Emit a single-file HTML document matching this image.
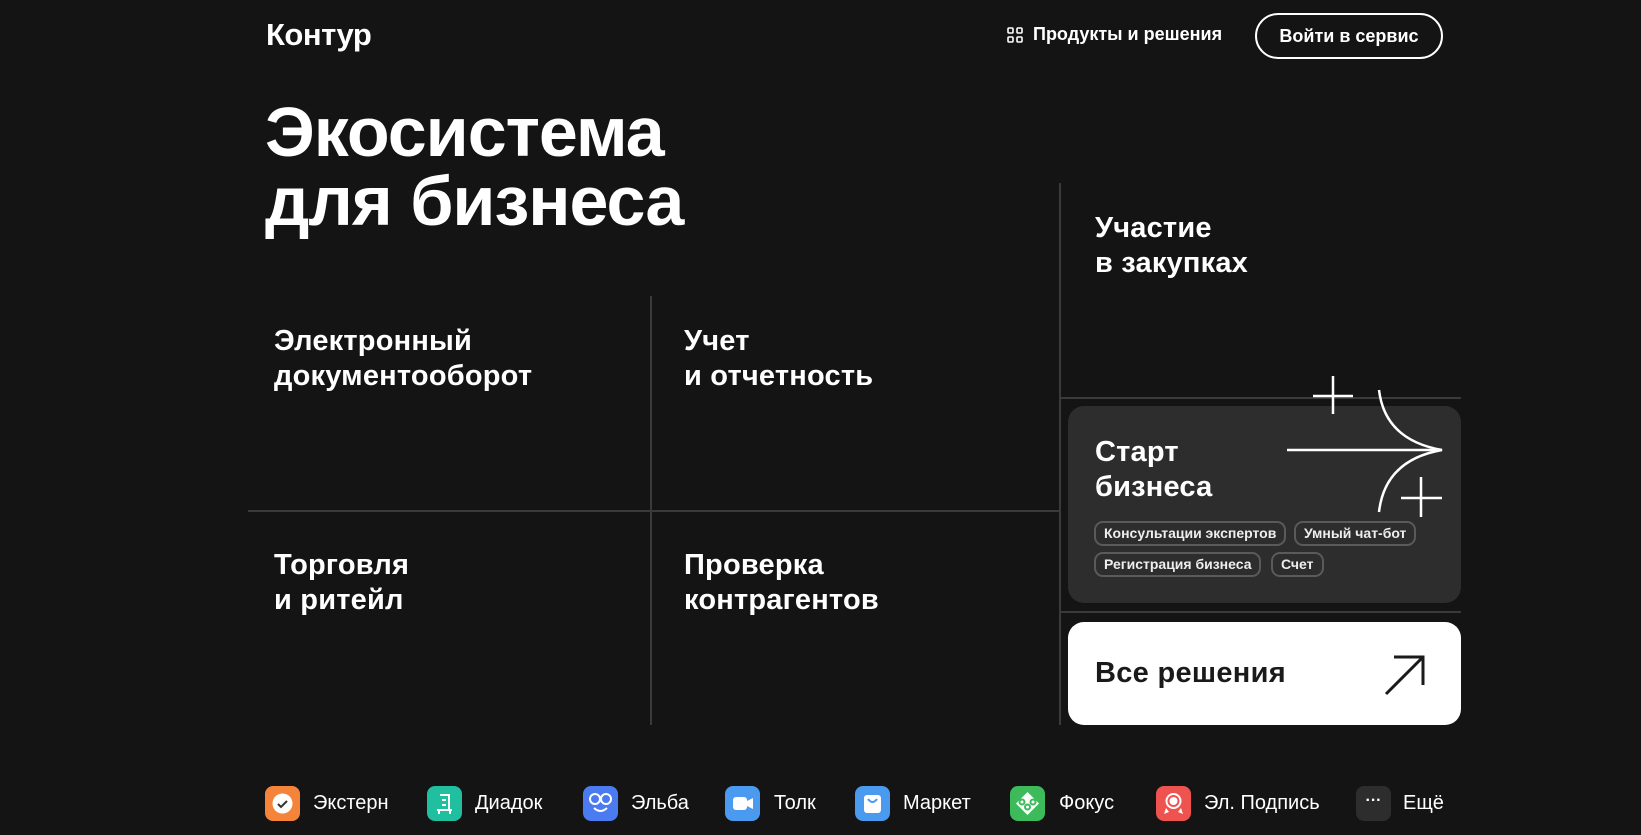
<!DOCTYPE html><html><head><meta charset="utf-8"><style>
*{margin:0;padding:0;box-sizing:border-box}
body{width:1641px;height:835px;background:#141414;color:#fff;font-family:"Liberation Sans","DejaVu Sans",sans-serif;position:relative;overflow:hidden}
.a{position:absolute;white-space:nowrap}
.t{font-size:29px;font-weight:bold;line-height:35px;letter-spacing:0.2px}
.line{position:absolute;background:#3a3a3a}
.chip{position:absolute;height:25px;border:2px solid #5a5a5a;border-radius:9px;font-size:14px;font-weight:bold;line-height:21px;padding:0 8px;color:#eee}
.ic{position:absolute;top:786px;width:35px;height:35px;border-radius:8px}
.lb{position:absolute;top:791px;font-size:20px;line-height:24px}
</style></head><body>
<div class="a" style="left:266px;top:17px;font-size:31px;font-weight:bold;letter-spacing:-0.5px">Контур</div>
<svg class="a" style="left:1007px;top:27px" width="16" height="16" viewBox="0 0 16 16" fill="none" stroke="#fff" stroke-width="1.6"><rect x="1" y="1" width="5" height="5" rx="1"/><rect x="10" y="1" width="5" height="5" rx="1"/><rect x="1" y="10" width="5" height="5" rx="1"/><rect x="10" y="10" width="5" height="5" rx="1"/></svg>
<div class="a" style="left:1033px;top:24px;font-size:18px;font-weight:bold">Продукты и решения</div>
<div class="a" style="left:1255px;top:13px;width:188px;height:46px;border:2px solid #fff;border-radius:23px;text-align:center;line-height:42px;font-size:18px;font-weight:bold">Войти в сервис</div>
<div class="a" style="left:265px;top:98px;font-size:70px;font-weight:bold;line-height:69px;letter-spacing:-1px">Экосистема<br>для бизнеса</div>
<div class="line" style="left:650px;top:296px;width:2px;height:429px"></div>
<div class="line" style="left:248px;top:510px;width:812px;height:2px"></div>
<div class="line" style="left:1059px;top:183px;width:2px;height:542px"></div>
<div class="line" style="left:1060px;top:397px;width:401px;height:2px"></div>
<div class="line" style="left:1060px;top:611px;width:401px;height:2px"></div>
<div class="a t" style="left:274px;top:324px">Электронный<br>документооборот</div>
<div class="a t" style="left:684px;top:324px">Учет<br>и отчетность</div>
<div class="a t" style="left:274px;top:548px">Торговля<br>и ритейл</div>
<div class="a t" style="left:684px;top:548px">Проверка<br>контрагентов</div>
<div class="a t" style="left:1095px;top:211px">Участие<br>в закупках</div>
<div class="a" style="left:1068px;top:406px;width:393px;height:197px;background:#2d2d2d;border-radius:16px"></div>
<div class="a t" style="left:1095px;top:435px">Старт<br>бизнеса</div>
<div class="chip" style="left:1094px;top:521px">Консультации экспертов</div>
<div class="chip" style="left:1294px;top:521px">Умный чат-бот</div>
<div class="chip" style="left:1094px;top:552px">Регистрация бизнеса</div>
<div class="chip" style="left:1271px;top:552px">Счет</div>
<svg class="a" style="left:0;top:0" width="1641" height="835" fill="none" stroke="#fff" stroke-width="2.5">
<path d="M1287 450H1442"/><path d="M1379 390Q1385 440 1442 450Q1385 460 1379 512"/>
<path d="M1333 376V414M1313 396H1353"/><path d="M1421 477V517M1401 498H1442"/>
</svg>
<div class="a" style="left:1068px;top:622px;width:393px;height:103px;background:#fff;border-radius:16px"></div>
<div class="a" style="left:1095px;top:657px;font-size:29px;font-weight:bold;color:#1a1a1a;letter-spacing:0.3px">Все решения</div>
<svg class="a" style="left:1382px;top:652px" width="46" height="46" fill="none" stroke="#1a1a1a" stroke-width="3"><path d="M4 42L41 5M12 5H41V33"/></svg>
<div class="ic" style="left:265px;background:#f5843b"><svg width="35" height="35"><circle cx="17.5" cy="17.5" r="10" fill="#fff"/><path d="M13 18l3 3 6-6" stroke="#333" stroke-width="2" fill="none"/></svg></div>
<div class="lb" style="left:313px">Экстерн</div>
<div class="ic" style="left:427px;background:#1fbf9f"><svg width="35" height="35" fill="none" stroke="#fff" stroke-width="2"><path d="M13 9h9v15M10 24h15M15 14h4M15 19h4M12 28v-4M23 28v-4"/></svg></div>
<div class="lb" style="left:475px">Диадок</div>
<div class="ic" style="left:583px;background:#4b7bf0"><svg width="35" height="35" fill="none" stroke="#fff" stroke-width="2"><circle cx="12" cy="13" r="5"/><circle cx="23" cy="13" r="5"/><path d="M11 22q6.5 6 13 0"/></svg></div>
<div class="lb" style="left:631px">Эльба</div>
<div class="ic" style="left:725px;background:#4a9bf0"><svg width="35" height="35"><rect x="8" y="11" width="14" height="13" rx="3" fill="#fff"/><path d="M22 15l6-3v11l-6-3z" fill="#fff"/></svg></div>
<div class="lb" style="left:774px">Толк</div>
<div class="ic" style="left:855px;background:#4a9bf0"><svg width="35" height="35"><rect x="9" y="9" width="17" height="18" rx="3" fill="#fff"/><path d="M13 13q4.5 6 9 0" stroke="#4a9bf0" stroke-width="2" fill="none"/></svg></div>
<div class="lb" style="left:903px">Маркет</div>
<div class="ic" style="left:1010px;background:#3dba5a"><svg width="35" height="35"><path d="M17.5 6L29 17.5 17.5 29 6 17.5z" fill="#fff"/><circle cx="12" cy="16" r="2.5" fill="none" stroke="#3dba5a" stroke-width="2"/><circle cx="23" cy="16" r="2.5" fill="none" stroke="#3dba5a" stroke-width="2"/><circle cx="17.5" cy="21" r="2.5" fill="none" stroke="#3dba5a" stroke-width="2"/></svg></div>
<div class="lb" style="left:1059px">Фокус</div>
<div class="ic" style="left:1156px;background:#ef5350"><svg width="35" height="35"><circle cx="17.5" cy="15" r="8" fill="#fff"/><circle cx="17.5" cy="15" r="5" fill="none" stroke="#ef5350" stroke-width="2"/><path d="M10 22l-2 6 5-2M25 22l2 6-5-2" fill="#fff"/></svg></div>
<div class="lb" style="left:1204px">Эл. Подпись</div>
<div class="ic" style="left:1356px;background:#2d2d2d;color:#fff;text-align:center;font-size:16px;line-height:30px;font-weight:bold">···</div>
<div class="lb" style="left:1403px">Ещё</div>
</body></html>
